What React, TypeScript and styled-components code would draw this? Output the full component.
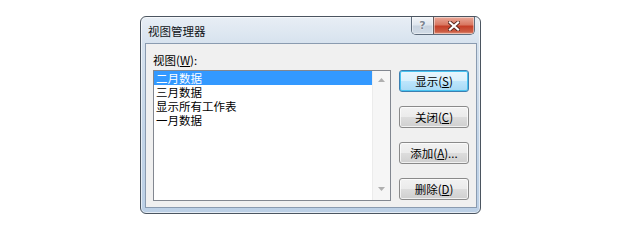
import React from "react";
import styled, { createGlobalStyle } from "styled-components";

const GlobalStyle = createGlobalStyle`
  html, body {
    margin: 0;
    padding: 0;
    background: #ffffff;
  }
  body {
    font-family: "Noto Sans CJK SC", "Liberation Sans", sans-serif;
    font-size: 11.5px;
    color: #000;
  }
`;

const Page = styled.div({
  width: 640,
  height: 236,
  boxSizing: "border-box",
  padding: "16px 0 0 140px",
});

const Dialog = styled.div({
  width: 341,
  height: 198,
  boxSizing: "border-box",
  display: "flex",
  flexDirection: "column",
  border: "1px solid #4b5560",
  borderRadius: 6,
  padding: "0 3px 5px 4px",
  background: "linear-gradient(#e8eef5 0%, #d6e2ee 14%, #c3d5e8 60%, #bcd0e6 100%)",
  boxShadow: "inset 0 0 0 1px rgba(255,255,255,0.6)",
});

const TitleBar = styled.div({
  height: 26,
  display: "flex",
  alignItems: "flex-start",
});

const Title = styled.div({
  alignSelf: "center",
  paddingLeft: 3,
  paddingTop: 1,
  color: "#101418",
  lineHeight: "14px",
});

const CaptionGroup = styled.div({
  marginLeft: "auto",
  marginRight: 2,
  display: "flex",
  height: 17,
  border: "1px solid #5f6d7d",
  borderTop: "none",
  borderRadius: "0 0 5px 5px",
  overflow: "hidden",
});

const CaptionButton = styled.div<{ $close?: boolean }>`
  width: ${(p) => (p.$close ? 41 : 21)}px;
  height: 17px;
  display: flex;
  align-items: center;
  justify-content: center;
  box-sizing: border-box;
  border-left: ${(p) => (p.$close ? "1px solid #6b5a5a" : "none")};
  background: ${(p) =>
    p.$close
      ? "linear-gradient(#eaa999 0%, #d97862 45%, #c53f28 55%, #cc5c43 85%, #e0947c 100%)"
      : "linear-gradient(#f2f5f8 0%, #dfe6ee 45%, #c8d3df 55%, #d2dce7 100%)"};
  box-shadow: inset 0 0 0 1px rgba(255, 255, 255, 0.45);
`;

const HelpGlyph = styled.span({
  fontFamily: '"DejaVu Sans", sans-serif',
  fontWeight: "bold",
  fontSize: 11,
  color: "#7d8793",
  textShadow: "0 0 2px #fff, 0 0 1px #fff",
  lineHeight: "11px",
});

const Client = styled.div({
  flex: 1,
  boxSizing: "border-box",
  background: "#f0f0f0",
  border: "1px solid #8a9bb0",
  display: "grid",
  gridTemplateColumns: "238px 70px",
  gridTemplateRows: "17px 131px",
  columnGap: 8,
  padding: "9px 7px 0 7px",
});

const Label = styled.div({
  lineHeight: "14px",
  gridColumn: "1 / 3",
});

const U = styled.span({
  textDecoration: "underline",
  textUnderlineOffset: 1,
});

const ListBox = styled.div({
  boxSizing: "border-box",
  border: "1px solid #828790",
  background: "#fff",
  display: "flex",
});

const Items = styled.div({
  flex: 1,
  display: "flex",
  flexDirection: "column",
});

const Item = styled.div<{ $selected?: boolean }>`
  height: 14px;
  line-height: 14px;
  padding-left: 2px;
  color: ${(p) => (p.$selected ? "#fff" : "#000")};
  background: ${(p) => (p.$selected ? "#3399ff" : "transparent")};
`;

const ScrollBar = styled.div({
  width: 17,
  display: "flex",
  flexDirection: "column",
  justifyContent: "space-between",
  alignItems: "center",
  background: "#f6f6f6",
  borderLeft: "1px solid #ececec",
  padding: "7px 0 9px",
});

const Buttons = styled.div({
  display: "flex",
  flexDirection: "column",
  gap: 14,
});

const Button = styled.div<{ $default?: boolean }>`
  height: 22px;
  box-sizing: border-box;
  border: 1px solid ${(p) => (p.$default ? "#3c7fb1" : "#8a8a8a")};
  border-radius: 3px;
  display: flex;
  align-items: center;
  justify-content: center;
  line-height: 14px;
  background: ${(p) =>
    p.$default
      ? "linear-gradient(#eaf6fd 0%, #d9f0fc 50%, #bee6fd 50%, #a7d9f5 100%)"
      : "linear-gradient(#f2f2f2 0%, #ebebeb 50%, #dddddd 50%, #cfcfcf 100%)"};
  box-shadow: ${(p) =>
    p.$default
      ? "inset 0 0 0 1px #48c3f0"
      : "inset 0 0 0 1px rgba(255,255,255,0.7)"};
`;

function Arrow({ up }: { up?: boolean }) {
  return (
    <svg width="7" height="4" viewBox="0 0 7 4">
      <path d={up ? "M0 4 L3.5 0 L7 4 Z" : "M0 0 L3.5 4 L7 0 Z"} fill="#b0b0b0" />
    </svg>
  );
}

function CloseX() {
  return (
    <svg width="12" height="10" viewBox="0 0 12 10">
      <path d="M2 1.5 L10 8.5 M10 1.5 L2 8.5" stroke="#5a2a22" strokeWidth="4" strokeLinecap="square" />
      <path d="M2 1.5 L10 8.5 M10 1.5 L2 8.5" stroke="#ffffff" strokeWidth="2.2" strokeLinecap="square" />
    </svg>
  );
}

const views = ["二月数据", "三月数据", "显示所有工作表", "一月数据"];

function App() {
  return (
    <Page>
      <GlobalStyle />
      <Dialog>
        <TitleBar>
          <Title>视图管理器</Title>
          <CaptionGroup>
            <CaptionButton>
              <HelpGlyph>?</HelpGlyph>
            </CaptionButton>
            <CaptionButton $close>
              <CloseX />
            </CaptionButton>
          </CaptionGroup>
        </TitleBar>
        <Client>
          <Label>
            视图(<U>W</U>):
          </Label>
          <ListBox>
            <Items>
              {views.map((v, i) => (
                <Item key={v} $selected={i === 0}>
                  {v}
                </Item>
              ))}
            </Items>
            <ScrollBar>
              <Arrow up />
              <Arrow />
            </ScrollBar>
          </ListBox>
          <Buttons>
            <Button $default>
              显示(<U>S</U>)
            </Button>
            <Button>
              关闭(<U>C</U>)
            </Button>
            <Button>
              添加(<U>A</U>)...
            </Button>
            <Button>
              删除(<U>D</U>)
            </Button>
          </Buttons>
        </Client>
      </Dialog>
    </Page>
  );
}

export default App;
